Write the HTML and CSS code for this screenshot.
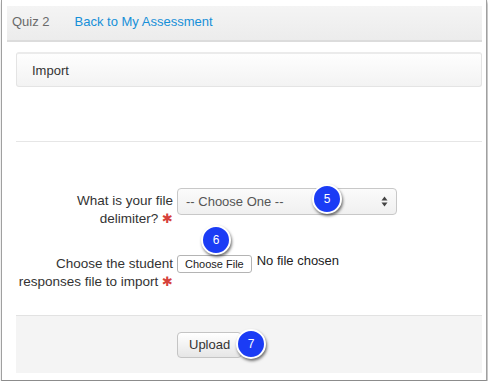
FILE: index.html
```html
<!DOCTYPE html>
<html lang="en">
<head>
    <meta charset="UTF-8">
    <title>Import</title>
    <link rel="stylesheet" href="styles.css">
</head>
<body>
    <div class="frame">
        <div class="topbar">
            <span class="quiz-name">Quiz 2</span>
            <a class="back-link" href="#">Back to My Assessment</a>
        </div>

        <div class="content">
            <div class="panel-head">Import</div>
            <div class="divider"></div>

            <div class="form-row row-delimiter">
                <label class="form-label">What is your file<br>delimiter? <span class="req">&#10033;</span></label>
                <div class="fake-select">
                    <span>-- Choose One --</span>
                    <svg class="select-arrows" width="7" height="11" viewBox="0 0 7 11">
                        <path d="M3.5 0.5 L6.5 4.5 L0.5 4.5 Z" fill="#444"/>
                        <path d="M3.5 10.5 L6.5 6.5 L0.5 6.5 Z" fill="#444"/>
                    </svg>
                </div>
            </div>

            <div class="form-row row-file">
                <label class="form-label">Choose the student<br>responses file to import <span class="req">&#10033;</span></label>
                <div class="file-field">
                    <button class="file-btn">Choose File</button>
                    <span class="file-name">No file chosen</span>
                </div>
            </div>

            <div class="form-footer">
                <button class="upload-btn">Upload</button>
            </div>
        </div>

        <span class="step step-5">5</span>
        <span class="step step-6">6</span>
        <span class="step step-7">7</span>
    </div>
</body>
</html>
```

FILE: styles.css
```css
body {
    margin: 0;
    background: #fff;
    font-family: "Liberation Sans", Arial, sans-serif;
    font-size: 13px;
    color: #333;
}
.frame {
    position: relative;
    width: 486px;
    height: 381px;
    margin-left: 1px;
    padding: 6px 4px 0 5px;
    box-sizing: border-box;
    border-left: 1px solid #a0a0a0;
    border-right: 1px solid #a0a0a0;
    border-bottom: 1px solid #8c8c8c;
    box-shadow: 1px 2px 3px rgba(0, 0, 0, 0.35);
}
.topbar {
    height: 31px;
    padding-bottom: 3px;
    display: flex;
    align-items: center;
    padding-left: 5px;
    gap: 25px;
    background: linear-gradient(#f4f4f4, #ececec);
    border-bottom: 2px solid #dcdcdc;
    font-size: 13px;
}
.quiz-name {
    color: #6a6a6a;
}
.back-link {
    color: #168fd8;
    text-decoration: none;
}
.content {
    padding-left: 9px;
}
.panel-head {
    margin-top: 10px;
    height: 32px;
    padding-left: 15px;
    display: flex;
    align-items: center;
    background: linear-gradient(#fefefe, #f3f3f3);
    border: 1px solid #e4e4e4;
    border-top: 2px solid #ebebeb;
    border-radius: 3px;
    color: #333;
}
.divider {
    margin-top: 54px;
    height: 1px;
    background: #e6e6e6;
}
.form-row {
    display: flex;
    align-items: flex-start;
}
.row-delimiter {
    margin-top: 45px;
}
.row-file {
    margin-top: 27px;
    height: 60px;
}
.form-label {
    width: 157px;
    margin-right: 4px;
    text-align: right;
    line-height: 18px;
    font-size: 13.5px;
    color: #333;
}
.row-delimiter .form-label {
    padding-top: 5px;
}
.req {
    color: #d6413b;
    font-family: "DejaVu Sans", sans-serif;
    font-size: 13px;
}
.fake-select {
    width: 202px;
    height: 25px;
    padding: 0 8px;
    display: flex;
    align-items: center;
    justify-content: space-between;
    border: 1px solid #c8c8c8;
    border-radius: 4px;
    background: linear-gradient(#fbfbfb, #f0f0f0);
    color: #555;
    margin-top: 1px;
}
.file-field {
    display: flex;
    align-items: center;
    gap: 5px;
}
.file-btn {
    height: 18px;
    padding: 0 7px;
    font-family: "Liberation Sans", Arial, sans-serif;
    font-size: 11px;
    color: #222;
    background: #fff;
    border: 1px solid #b4b4b4;
    border-radius: 3px;
}
.file-name {
    font-size: 13px;
    color: #222;
    margin-top: -7px;
}
.form-footer {
    height: 57px;
    padding-left: 161px;
    display: flex;
    align-items: center;
    background: #f4f4f4;
    border-top: 1px solid #e2e2e2;
}
.upload-btn {
    height: 26px;
    padding: 0 11px;
    font-family: "Liberation Sans", Arial, sans-serif;
    font-size: 13px;
    color: #333;
    background: linear-gradient(#ffffff, #e6e6e6);
    border: 1px solid #c4c4c4;
    border-radius: 4px;
}
.step {
    position: absolute;
    width: 26px;
    height: 26px;
    border: 2px solid #fff;
    border-radius: 50%;
    background: #1b3cf5;
    color: #fff;
    font-size: 12px;
    display: flex;
    align-items: center;
    justify-content: center;
    box-shadow: 1px 2px 3px rgba(0, 0, 0, 0.55);
}
.step-5 { left: 310px; top: 184px; }
.step-6 { left: 199px; top: 225px; }
.step-7 { left: 234px; top: 329px; }
```
